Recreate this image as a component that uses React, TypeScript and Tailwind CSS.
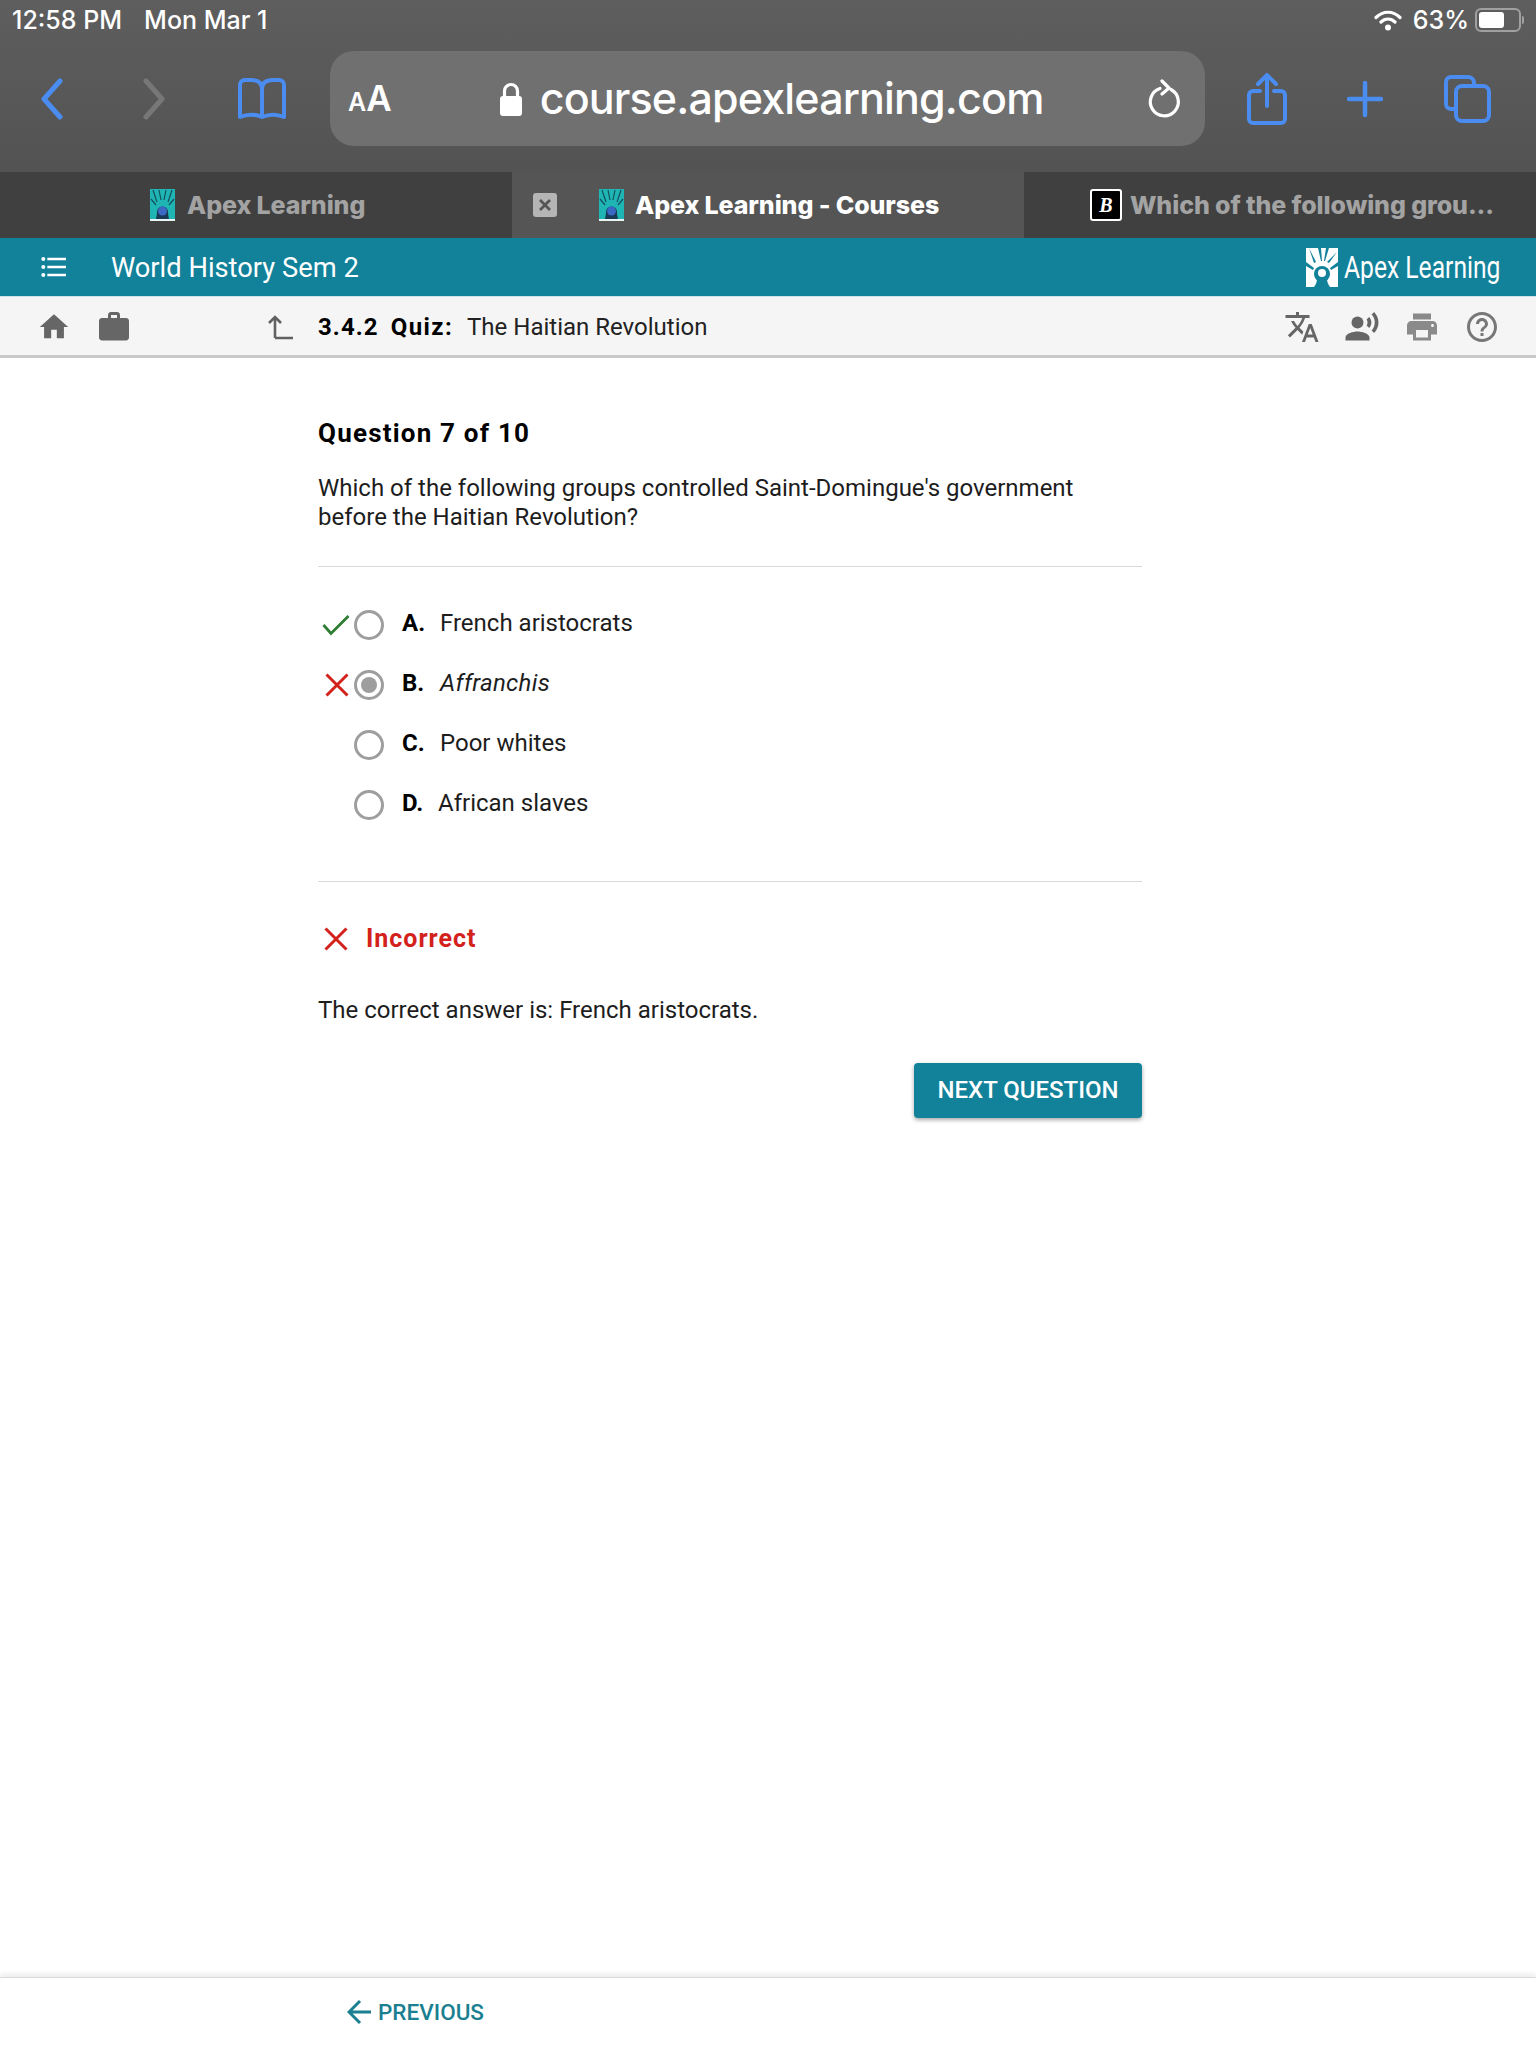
import React from "react";
import { MdHome, MdWork, MdTranslate, MdPrint, MdHelpOutline, MdRecordVoiceOver, MdFormatListBulleted } from "react-icons/md";

const Favicon = () => (
  <svg width="25" height="32" viewBox="0 0 25 32" className="shrink-0">
    <rect width="25" height="32" fill="#1fb5b5" />
    <path d="M3 1l4 12M9 1l2 10M16 1l-2 10M22 1l-4 12M1 10l5 6M24 10l-5 6" stroke="#12505a" strokeWidth="1.2" />
    <path d="M6 31c0-3 1-4 1-8a5.500 5.500 0 0 1 11 0c0 4 1 5 1 8z" fill="#173a55" />
    <circle cx="12.500" cy="22" r="4.500" fill="#3b68c4" />
    <rect y="30" width="25" height="2" fill="#e8f4f4" />
  </svg>
);

const LogoMark = () => (
  <svg width="32" height="39" viewBox="0 0 32 39" className="shrink-0">
    <rect width="32" height="39" fill="#fff" />
    <path d="M3 0l7 14-2 1zM12 0h3l1 13h-1zM20 0h3l-4 13h-1zM31 4l-8 11-2-1zM0 14l8 6-1 2-7-4zM32 14l-8 6 1 2 7-4z" fill="#12819a" />
    <circle cx="16" cy="26" r="8" fill="#12819a" />
    <circle cx="16" cy="25" r="4" fill="#fff" />
    <path d="M8 39c2-3 3-5 3-8h10c0 3 1 5 3 8z" fill="#12819a" />
  </svg>
);

const Cross = () => (
  <svg width="24" height="24" viewBox="0 0 24 24" className="shrink-0">
    <path d="M1.500 1.500l21 21M22.500 1.500l-21 21" stroke="#d3211b" strokeWidth="3" fill="none" />
  </svg>
);

const Check = () => (
  <svg width="28" height="22" viewBox="0 0 28 22" className="shrink-0">
    <path d="M1.500 11l7.500 8.500L26.500 2" stroke="#2f7d32" strokeWidth="2.800" fill="none" />
  </svg>
);

const options = [
  { mark: "check", letter: "A.", text: "French aristocrats", w: "w-[38px]" },
  { mark: "cross", letter: "B.", text: "Affranchis", italic: true, selected: true, w: "w-[38px]" },
  { mark: "", letter: "C.", text: "Poor whites", w: "w-[38px]" },
  { mark: "", letter: "D.", text: "African slaves", w: "w-[36px]" },
];

export default function App() {
  return (
    <div className="flex h-[2048px] w-full flex-col overflow-hidden bg-white font-['Roboto',sans-serif] text-[#1d1d1d]">
      {/* Browser chrome */}
      <header className="flex h-[172px] shrink-0 flex-col bg-gradient-to-b from-[#5e5e5e] to-[#535353] font-['Inter',sans-serif]">
        <div className="flex h-[40px] items-center justify-between pl-[12px] pr-[12px] text-[25px] font-medium leading-none text-white">
          <div className="flex gap-[22px]">
            <span>12:58 PM</span>
            <span>Mon Mar 1</span>
          </div>
          <div className="flex items-center">
            <svg width="28" height="22" viewBox="0 0 28 22">
              <path d="M2 8.500c7-7 17-7 24 0M7 13c4-4 10-4 14 0" stroke="#fff" strokeWidth="3.200" strokeLinecap="round" fill="none" />
              <circle cx="14" cy="18.500" r="3" fill="#fff" />
            </svg>
            <span className="ml-[11px]">63%</span>
            <div className="ml-[6px] flex h-[24px] w-[46px] items-center rounded-[6px] border-2 border-[#a0a0a0] p-[2px]">
              <div className="h-full w-[25px] rounded-[3px] bg-white" />
            </div>
            <div className="ml-[1px] h-[8px] w-[2px] rounded-r bg-[#a0a0a0]" />
          </div>
        </div>
        <div className="flex h-[117px] items-center">
          <svg width="28" height="42" viewBox="0 0 28 42" className="ml-[38px]">
            <path d="M22 3L6 21l16 18" stroke="#4a8cf0" strokeWidth="5" strokeLinecap="round" strokeLinejoin="round" fill="none" />
          </svg>
          <svg width="28" height="42" viewBox="0 0 28 42" className="ml-[74px]">
            <path d="M6 3l16 18L6 39" stroke="#777" strokeWidth="5" strokeLinecap="round" strokeLinejoin="round" fill="none" />
          </svg>
          <svg width="50" height="44" viewBox="0 0 50 44" className="ml-[69px]">
            <path d="M25 38V12C25 6 21 3 14 3H8C5 3 3 5 3 8v32c7-3 15-3 22 0 7-3 15-3 22 0V8c0-3-2-5-5-5h-6C29 3 25 6 25 12" stroke="#4a8cf0" strokeWidth="4" strokeLinejoin="round" fill="none" />
          </svg>
          <div className="ml-[43px] flex h-[95px] w-[875px] items-center rounded-[24px] bg-[#707070] text-white">
            <div className="ml-[18px] flex items-baseline font-semibold">
              <span className="text-[25px]">A</span>
              <span className="text-[35px]">A</span>
            </div>
            <div className="ml-[107px] flex items-center">
              <svg width="24" height="36" viewBox="0 0 24 36">
                <path d="M5.500 16V10a6.500 6.500 0 0 1 13 0v6" stroke="#fff" strokeWidth="3.200" fill="none" />
                <rect x="1" y="15" width="22" height="20" rx="3" fill="#fff" />
              </svg>
              <span className="ml-[17px] text-[43px] font-medium leading-none tracking-[-0.85px]">course.apexlearning.com</span>
            </div>
            <svg width="34" height="40" viewBox="0 0 34 40" className="ml-auto mr-[24px]">
              <path d="M13 9.500a14 14 0 1 0 11 1" stroke="#fff" strokeWidth="3.200" strokeLinecap="round" fill="none" />
              <path d="M15 2l7 7-7 6" stroke="#fff" strokeWidth="3.200" strokeLinecap="round" strokeLinejoin="round" fill="none" />
            </svg>
          </div>
          <svg width="42" height="52" viewBox="0 0 42 52" className="ml-[41px]">
            <path d="M14 18H7a4 4 0 0 0-4 4v24a4 4 0 0 0 4 4h28a4 4 0 0 0 4-4V22a4 4 0 0 0-4-4h-7M21 33V3M12 11l9-9 9 9" stroke="#4a8cf0" strokeWidth="4" strokeLinecap="round" strokeLinejoin="round" fill="none" />
          </svg>
          <svg width="38" height="38" viewBox="0 0 38 38" className="ml-[58px]">
            <path d="M19 3v32M3 19h32" stroke="#4a8cf0" strokeWidth="4.500" strokeLinecap="round" fill="none" />
          </svg>
          <svg width="48" height="48" viewBox="0 0 48 48" className="ml-[59px]">
            <rect x="13" y="11" width="33" height="35" rx="6" stroke="#4a8cf0" strokeWidth="4" fill="none" />
            <path d="M13 34H8a5 5 0 0 1-5-5V7a5 5 0 0 1 5-5h17a6 6 0 0 1 6 6v3" stroke="#4a8cf0" strokeWidth="4" fill="none" />
          </svg>
        </div>
      </header>

      {/* Tabs */}
      <nav className="flex h-[66px] shrink-0 bg-[#404040] font-['Inter',sans-serif] text-[25px] font-extrabold leading-none">
        <div className="flex w-[512px] items-center pl-[150px] text-[#a3a3a3]">
          <Favicon />
          <span className="ml-[12px] tracking-[-0.1px]">Apex Learning</span>
        </div>
        <div className="flex w-[512px] items-center bg-[#555555] text-white">
          <div className="ml-[21px] flex h-[24px] w-[24px] items-center justify-center rounded-[3px] bg-[#b5b5b5]">
            <svg width="14" height="14" viewBox="0 0 14 14">
              <path d="M2 2l10 10M12 2L2 12" stroke="#555" strokeWidth="2.800" />
            </svg>
          </div>
          <div className="ml-[42px]">
            <Favicon />
          </div>
          <span className="ml-[11px] tracking-[-0.1px]">Apex Learning - Courses</span>
        </div>
        <div className="flex flex-1 items-center pl-[66px] text-[#a3a3a3]">
          <div className="flex h-[32px] w-[32px] shrink-0 items-center justify-center rounded-[3px] border-2 border-white bg-black font-['Liberation_Serif',serif] text-[20px] font-bold italic text-white">
            B
          </div>
          <span className="ml-[8px] whitespace-nowrap tracking-[-0.1px]">Which of the following grou...</span>
        </div>
      </nav>

      {/* Course bar */}
      <div className="flex h-[58px] shrink-0 items-center bg-[#12819a] text-white">
        <MdFormatListBulleted size={32} className="ml-[38px]" />
        <span className="ml-[41px] mt-[4px] text-[27.300px] leading-none">World History Sem 2</span>
        <div className="ml-auto mr-[36px] flex items-center">
          <LogoMark />
          <span className="ml-[6px] w-[156px] origin-left scale-x-[0.77] whitespace-nowrap text-[32px] font-normal leading-none">Apex Learning</span>
        </div>
      </div>

      {/* Lesson bar */}
      <div className="flex h-[62px] shrink-0 items-center border-t border-[#cfe3e8] border-b-[3px] border-b-[#c9c9c9] bg-[#f5f5f5] pt-[2px]">
        <MdHome size={34} className="ml-[37px] text-[#666666]" />
        <MdWork size={36} className="ml-[25px] text-[#666666]" />
        <svg width="28" height="28" viewBox="0 0 28 28" className="ml-[135px]">
          <path d="M8 25V4M2 10l6-6 6 6M8 25h18" stroke="#616161" strokeWidth="2.600" fill="none" />
        </svg>
        <span className="ml-[23px] text-[24px] font-bold tracking-[1.1px] text-black">3.4.2</span>
        <span className="ml-[12px] text-[24px] font-bold tracking-[1.4px] text-black">Quiz:</span>
        <span className="ml-[14px] text-[24px] text-[#222]">The Haitian Revolution</span>
        <div className="ml-auto mr-[36px] flex items-center gap-[24px]">
          <MdTranslate size={36} className="text-[#666666]" />
          <MdRecordVoiceOver size={36} className="text-[#666666]" />
          <MdPrint size={36} className="text-[#8a8a8a]" />
          <MdHelpOutline size={36} className="text-[#777777]" />
        </div>
      </div>

      {/* Question */}
      <main className="min-h-0 flex-1">
        <div className="ml-[318px] w-[824px]">
          <h1 className="mt-[58px] text-[26px] font-bold leading-[34px] tracking-[1.2px] text-black">Question 7 of 10</h1>
          <p className="mt-[24px] text-[24px] leading-[29px]">
            Which of the following groups controlled Saint-Domingue's government
            <br />
            before the Haitian Revolution?
          </p>
          <hr className="mt-[34px] border-t border-[#d9d9d9]" />
          <ul className="mt-[28px] flex flex-col">
            {options.map((o) => (
              <li key={o.letter} className="flex h-[60px] items-center">
                <div className="flex w-[36px] items-center justify-end pr-[4px]">
                  {o.mark === "check" && <Check />}
                  {o.mark === "cross" && (
                    <div className="mr-[1px]">
                      <Cross />
                    </div>
                  )}
                </div>
                <div className="flex h-[30px] w-[30px] shrink-0 items-center justify-center rounded-full border-[3px] border-[#9e9e9e]">
                  {o.selected && <div className="h-[16px] w-[16px] rounded-full bg-[#9e9e9e]" />}
                </div>
                <div className="-mt-[4px] ml-[18px] flex text-[24px] leading-none">
                  <span className={`${o.w} font-bold text-black`}>{o.letter}</span>
                  <span className={o.italic ? "italic tracking-[0.3px]" : ""}>{o.text}</span>
                </div>
              </li>
            ))}
          </ul>
          <hr className="mt-[46px] border-t border-[#d9d9d9]" />
          <div className="mt-[44px] flex items-center pl-[6px]">
            <Cross />
            <span className="ml-[18px] text-[25px] font-bold leading-none tracking-[1px] text-[#d3211b]">Incorrect</span>
          </div>
          <p className="mt-[45px] text-[24px] leading-[29px]">The correct answer is: French aristocrats.</p>
          <div className="mt-[38px] flex justify-end">
            <button className="h-[55px] w-[228px] rounded-[4px] bg-[#12819a] pb-[2px] text-[24px] font-medium leading-none text-white shadow-[0_2px_4px_rgba(0,0,0,0.35)]">
              NEXT QUESTION
            </button>
          </div>
        </div>
      </main>

      {/* Footer */}
      <footer className="flex h-[71px] shrink-0 items-center border-t border-[#dcdcdc] bg-white pb-[2px] pl-[347px] shadow-[0_-3px_5px_rgba(0,0,0,0.08)]">
        <svg width="26" height="26" viewBox="0 0 26 26">
          <path d="M24 13H3M13 2L2 13l11 11" stroke="#1b7f92" strokeWidth="3" fill="none" />
        </svg>
        <span className="ml-[5px] text-[22.500px] font-medium leading-none text-[#1b7f92]">PREVIOUS</span>
      </footer>
    </div>
  );
}
